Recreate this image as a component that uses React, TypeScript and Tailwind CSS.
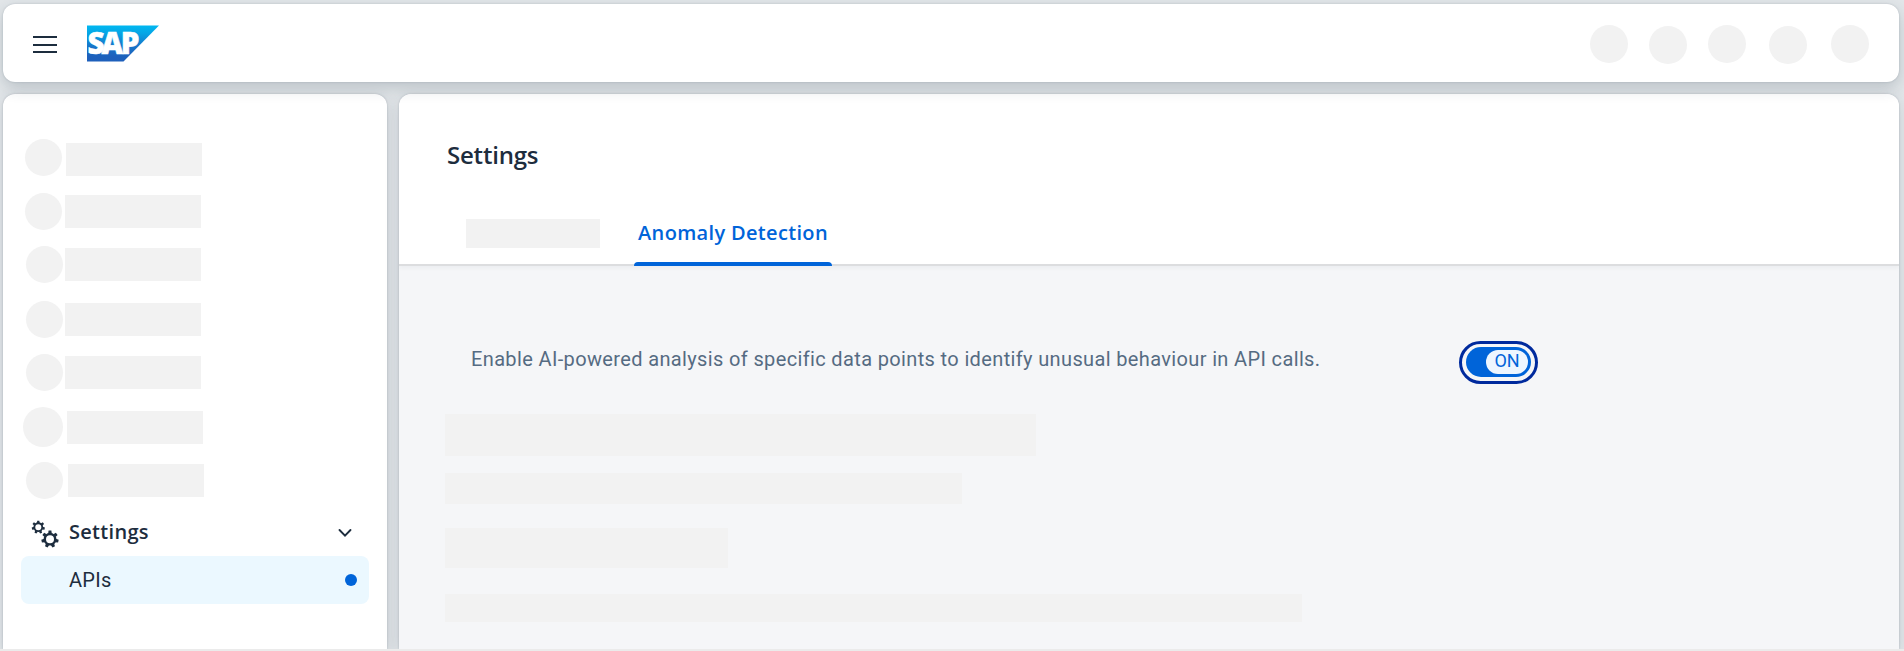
const headerSlots = [
  "mt-[21px]",
  "mt-[22px] ml-[21px]",
  "mt-[21px] ml-[21px]",
  "mt-[22px] ml-[23px]",
  "mt-[21px] ml-[24px]",
];

const navSlots = [
  { row: "h-[54px] pl-[22px]", dot: "size-[37px]", bar: "mt-[4px] ml-[4px]" },
  { row: "h-[53px] pl-[22px]", dot: "size-[37px]", bar: "mt-[2px] ml-[3px]" },
  { row: "h-[55px] pl-[23px]", dot: "size-[37px]", bar: "mt-[2px] ml-[2px]" },
  { row: "h-[53px] pl-[23px]", dot: "size-[37px]", bar: "mt-[2px] ml-[2px]" },
  { row: "h-[53px] pl-[23px]", dot: "size-[37px]", bar: "mt-[2px] ml-[2px]" },
  { row: "h-[55px] pl-[20px]", dot: "size-[40px]", bar: "mt-[4px] ml-[4px]" },
  { row: "h-[49px] pl-[23px]", dot: "size-[37px]", bar: "mt-[2px] ml-[5px]" },
];

const contentSlots = [
  "mt-[30px] h-[42px] w-[591px]",
  "mt-[17px] h-[31px] w-[517px]",
  "mt-[24px] h-[40px] w-[283px]",
  "mt-[26px] h-[28px] w-[857px]",
];

const teeth = [0, 1, 2, 3, 4, 5, 6].map((n) => (n * 360) / 7);

function Gear({ cx, cy, scale }: { cx: number; cy: number; scale: number }) {
  return (
    <g transform={`translate(${cx} ${cy}) scale(${scale})`}>
      <circle r="5.2" fill="none" stroke="#1d2d3e" strokeWidth="2.4" />
      {teeth.map((angle) => (
        <path key={angle} d="M-1.8 -5.6 L-1.4 -8.6 H1.4 L1.8 -5.6 Z" fill="#1d2d3e" transform={`rotate(${angle})`} />
      ))}
    </g>
  );
}

function SapLogo() {
  return (
    <svg className="ml-[30px] mt-[21px] h-[37px] w-[72px] shrink-0 overflow-visible" viewBox="0 0 72 37" role="img">
      <defs>
        <linearGradient id="sap" x1="0" y1="0" x2="0" y2="1">
          <stop offset="0" stopColor="#00b8f1" />
          <stop offset="0.22" stopColor="#06a5e5" />
          <stop offset="0.55" stopColor="#1678cb" />
          <stop offset="0.85" stopColor="#1d61bc" />
          <stop offset="1" stopColor="#1e5fbb" />
        </linearGradient>
      </defs>
      <path d="M0 .5H72L36.500 36.500H0Z" fill="url(#sap)" />
      <text
        y="28.600"
        fill="#fff"
        stroke="#fff"
        strokeWidth="0.5"
        className="font-['Open_Sans'] text-[29.5px] font-extrabold"
      >
        <tspan x="0.500">S</tspan>
        <tspan x="14.500">A</tspan>
        <tspan x="33.700">P</tspan>
      </text>
    </svg>
  );
}

function Header() {
  return (
    <header className="relative flex h-[78px] shrink-0 items-start rounded-xl bg-white pr-[30px] shadow-[0_0_2px_rgba(34,53,72,0.22),0_6px_16px_rgba(34,53,72,0.20)]">
      <button className="ml-[30px] mt-[32px] flex w-6 flex-col gap-[5.500px]">
        <span className="h-[2px] w-6 bg-[#1d2d3e]" />
        <span className="h-[2px] w-6 bg-[#1d2d3e]" />
        <span className="h-[2px] w-6 bg-[#1d2d3e]" />
      </button>
      <SapLogo />
      <div className="ml-auto flex items-start">
        {headerSlots.map((slot, i) => (
          <div key={i} className={`size-[38px] rounded-full bg-[#f2f2f2] ${slot}`} />
        ))}
      </div>
    </header>
  );
}

function Sidebar() {
  return (
    <nav className="flex w-[384px] shrink-0 flex-col rounded-t-xl bg-white pt-[45px] shadow-[0_0_2px_rgba(34,53,72,0.25),0_4px_16px_rgba(34,53,72,0.14)]">
      {navSlots.map((slot, i) => (
        <div key={i} className={`flex shrink-0 items-start ${slot.row}`}>
          <div className={`shrink-0 rounded-full bg-[#f2f2f2] ${slot.dot}`} />
          <div className={`h-[33px] w-[136px] bg-[#f2f2f2] ${slot.bar}`} />
        </div>
      ))}
      <div className="flex h-[45px] shrink-0 items-center pl-[27px] pr-[34px]">
        <svg className="h-[30px] w-[32px] shrink-0" viewBox="0 0 32 30">
          <Gear cx={8.3} cy={8.2} scale={0.76} />
          <Gear cx={20} cy={20.2} scale={1} />
        </svg>
        <span className="ml-[7px] mt-[-4px] text-[20px] font-semibold leading-7 tracking-[0.3px]">Settings</span>
        <svg className="ml-auto mt-[-2px] h-[10px] w-[16px]" viewBox="0 0 16 10">
          <path d="M2.500 2 L8 7.600 L13.500 2" fill="none" stroke="#1d2d3e" strokeWidth="1.900" strokeLinecap="round" />
        </svg>
      </div>
      <div className="mx-[18px] flex h-12 shrink-0 items-center justify-between rounded-lg bg-[#ebf8ff] pl-12 pr-3">
        <span className="font-[Roboto,sans-serif] text-[20px] leading-7 tracking-[0.3px]">APIs</span>
        <span className="size-3 rounded-full bg-[#0064d9]" />
      </div>
    </nav>
  );
}

function Toggle() {
  return (
    <button className="ml-[141px] mt-[75px] flex h-[43px] w-[79px] shrink-0 rounded-full border-[3px] border-[#002a9d] px-1 py-[3px]">
      <span className="flex h-[30px] w-full items-center justify-end rounded-full bg-[#0064d9] pr-[3px]">
        <span className="flex h-[24px] w-[42px] items-center justify-center rounded-full bg-[#edf6ff] pb-[2px] font-[Roboto,sans-serif] text-[18px] leading-none text-[#0064d9]">
          ON
        </span>
      </span>
    </button>
  );
}

function Main() {
  return (
    <main className="flex min-w-0 flex-1 flex-col overflow-hidden rounded-t-xl bg-[#f5f6f8] shadow-[0_0_2px_rgba(34,53,72,0.25),0_4px_16px_rgba(34,53,72,0.14)]">
      <section className="flex h-[172px] shrink-0 flex-col border-b-2 border-[#dcdddf] bg-white shadow-[0_2px_4px_rgba(34,53,72,0.05)]">
        <h1 className="ml-[48px] mt-[44px] text-[24px] font-semibold leading-[34px] tracking-[-0.2px]">Settings</h1>
        <div className="ml-[67px] mt-[38px] flex h-[56px] items-start">
          <div className="mt-[9px] h-[29px] w-[134px] bg-[#f2f2f2]" />
          <div className="ml-[34px] flex h-[56px] w-[198px] flex-col items-center justify-between">
            <span className="mt-[9px] whitespace-nowrap text-[20px] font-semibold leading-7 tracking-[0.33px] text-[#0064d9]">
              Anomaly Detection
            </span>
            <span className="relative h-1 w-full shrink-0 rounded-t bg-[#0064d9]" />
          </div>
        </div>
      </section>
      <section className="pl-[46px]">
        <div className="flex items-start">
          <p className="ml-[26px] mt-[79px] w-[847px] whitespace-nowrap font-[Roboto,sans-serif] text-[20px] leading-7 tracking-[0.36px] text-[#556b82]">
            Enable AI-powered analysis of specific data points to identify unusual behaviour in API calls.
          </p>
          <Toggle />
        </div>
        {contentSlots.map((slot, i) => (
          <div key={i} className={`bg-[#f2f2f2] ${slot}`} />
        ))}
      </section>
    </main>
  );
}

export default function App() {
  return (
    <div className="flex h-[651px] w-[1904px] flex-col overflow-hidden border-b-2 border-[#ebebeb] bg-[#e2e6e9] pl-[3px] pr-[5px] pt-1 font-['Open_Sans',sans-serif] text-[#1d2d3e]">
      <Header />
      <div className="mt-3 flex min-h-0 flex-1 gap-3">
        <Sidebar />
        <Main />
      </div>
    </div>
  );
}
